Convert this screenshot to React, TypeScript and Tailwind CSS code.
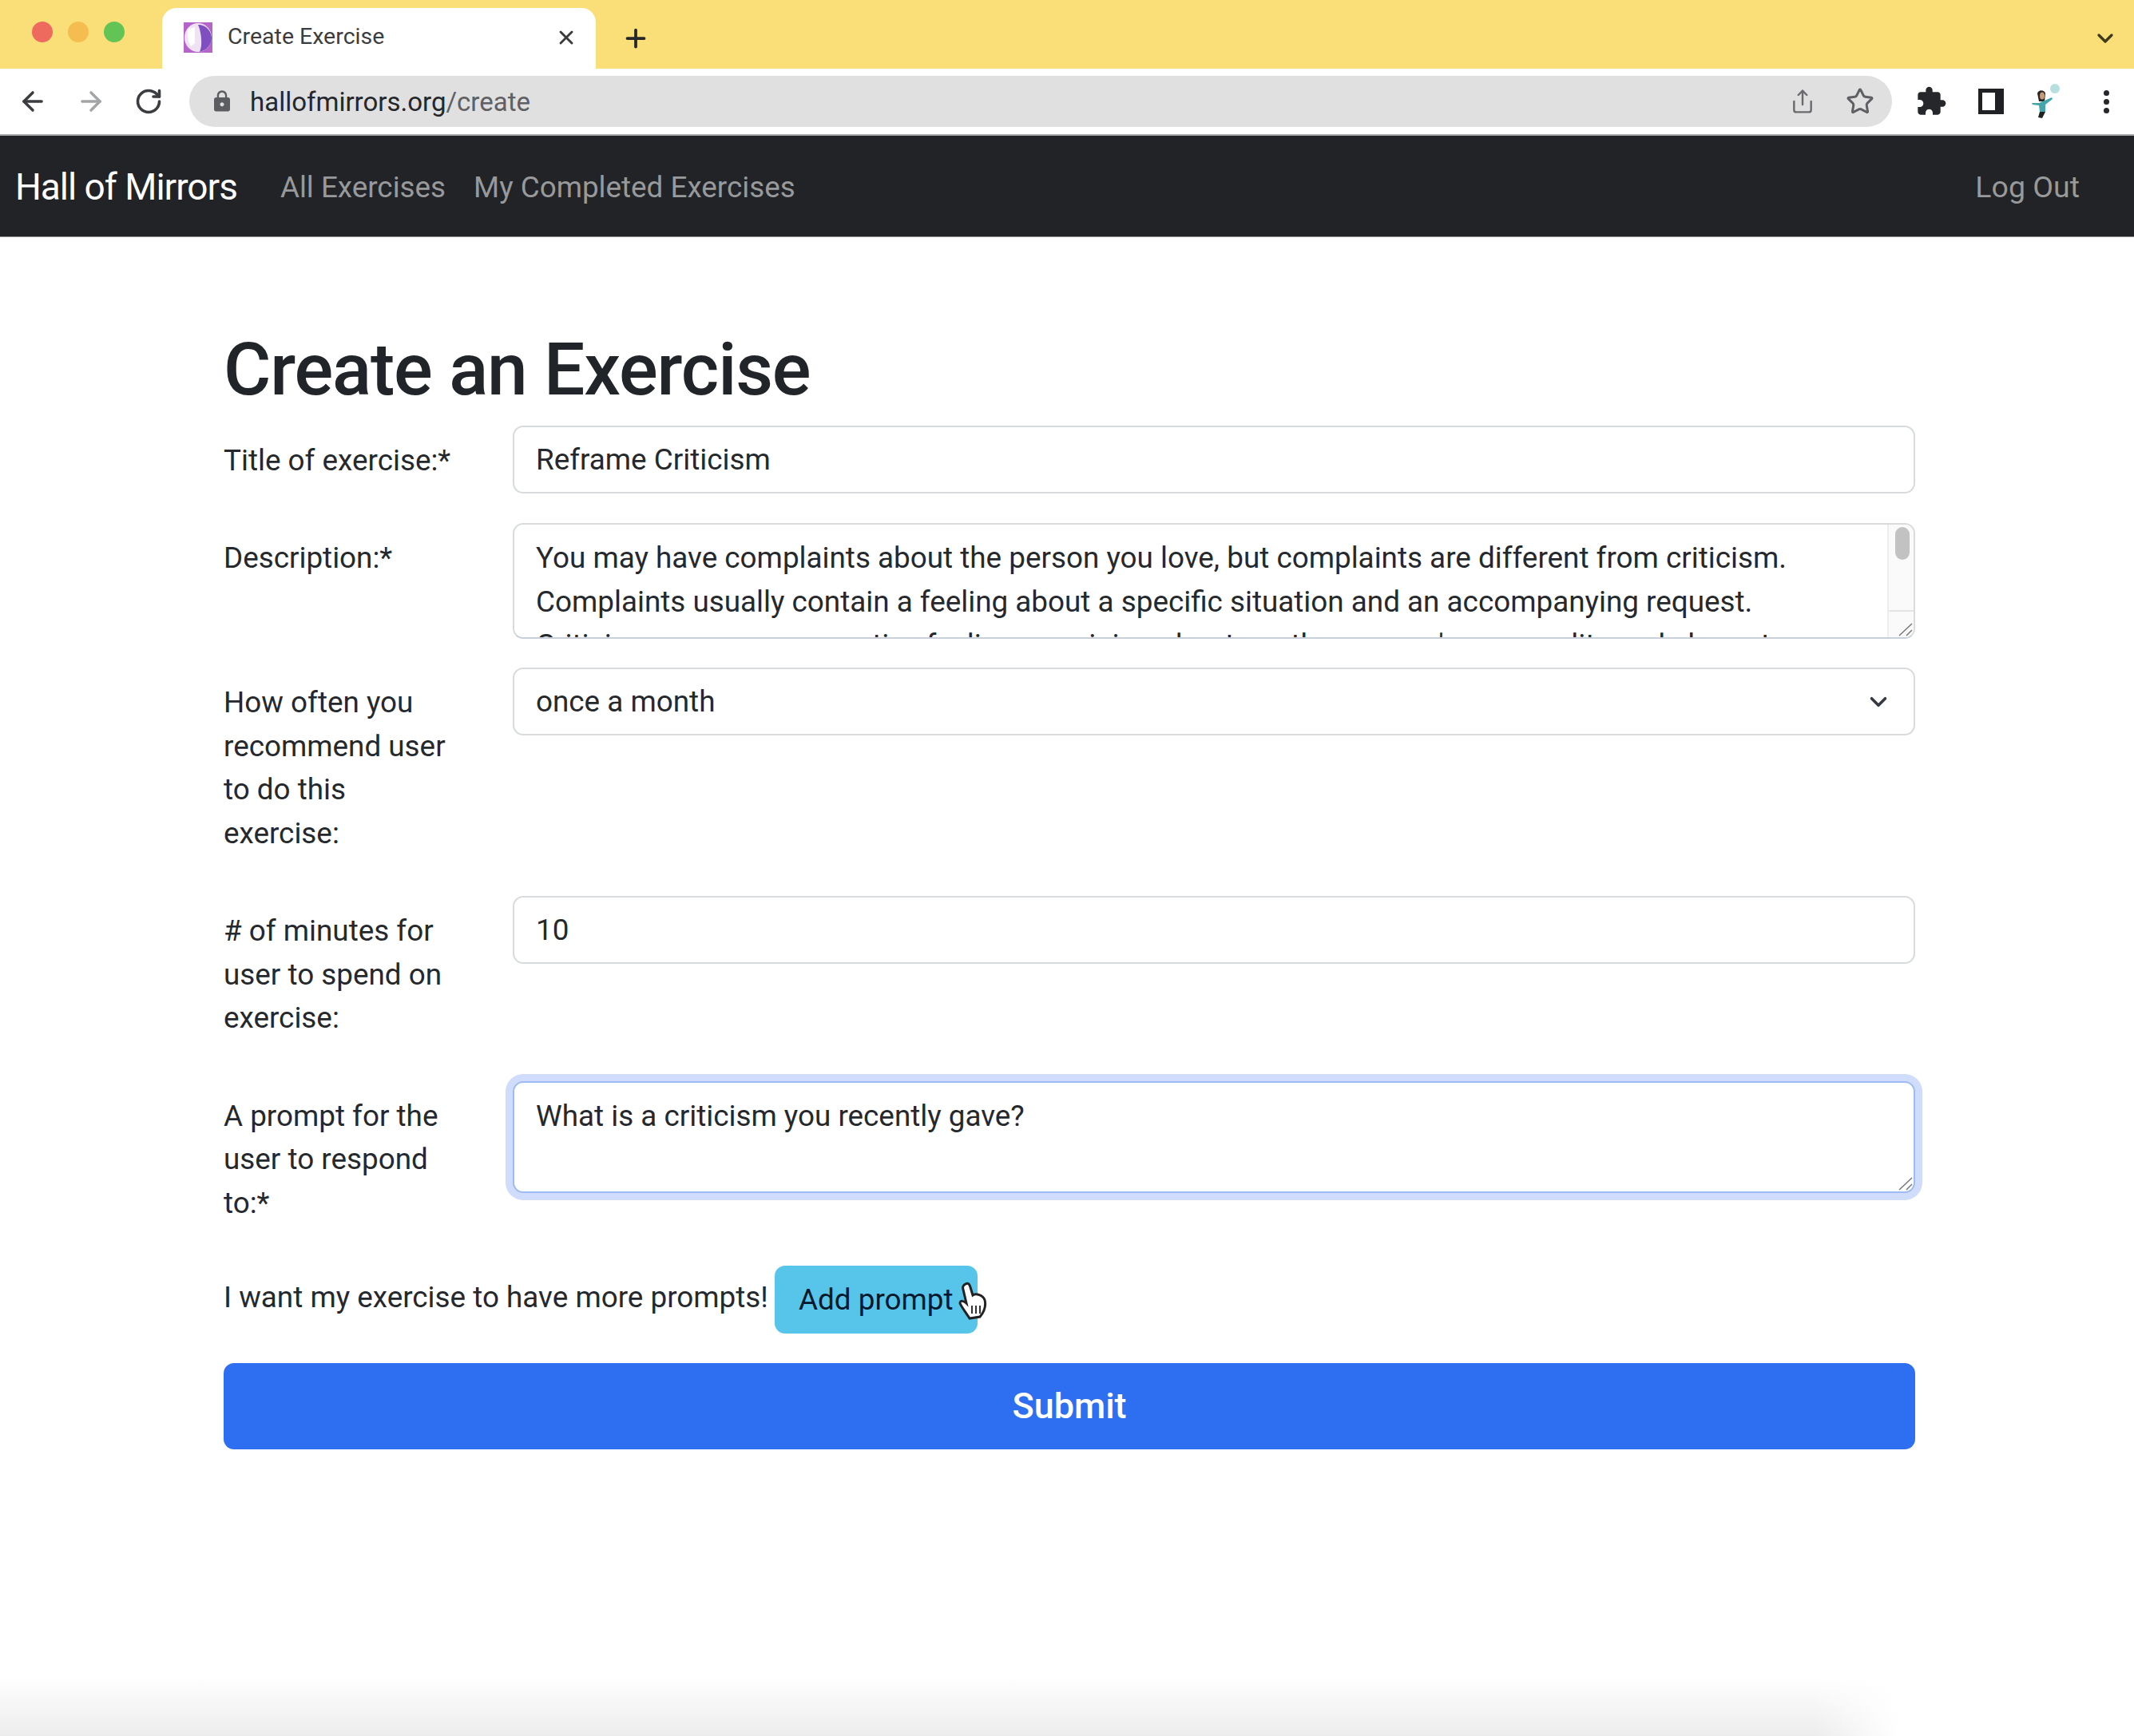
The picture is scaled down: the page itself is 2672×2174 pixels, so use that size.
import React from 'react';
import { ArrowLeft, ArrowRight, ChevronDown, Plus, RotateCw, Share, Star, X } from 'lucide-react';
import { MdExtension, MdLock } from 'react-icons/md';

const labelClass = 'w-[362px] shrink-0 pr-[72px] leading-[54.5px] pt-[17px] pb-[13px]';
const inputClass = 'flex-1 h-[85px] border-2 border-[#d8dbde] rounded-[13px] px-[27px] flex items-center bg-white';

function Favicon() {
  return (
    <svg width="36" height="38" viewBox="0 0 36 38" className="shrink-0">
      <rect width="36" height="38" fill="#b565c9" />
      <ellipse cx="18" cy="19" rx="17" ry="18" fill="#efe3f3" />
      <path d="M18 3 C28 3 34 10 35 19 C35 28 29 35 20 37 C24 28 22 12 18 3Z" fill="#7d4fc0" />
      <path d="M6 8 L14 6 L14 26 L9 30 C5 24 4 14 6 8Z" fill="#ffffff" />
    </svg>
  );
}

function Avatar() {
  return (
    <svg width="38" height="44" viewBox="0 0 38 44">
      <circle cx="30" cy="6" r="6" fill="#b5e0dd" />
      <path d="M8 12 C9 7 17 7 18 12 L17 22 L10 22Z" fill="#262626" />
      <ellipse cx="14" cy="15" rx="3" ry="4.5" fill="#c79a74" />
      <path d="M1 24 L10 24 L26 17 L27 19 L18 26 L18 35 L11 35 L10 27 L2 26Z" fill="#45a5ac" />
      <path d="M11 35 L18 35 L14 43 L9 42Z" fill="#222222" />
    </svg>
  );
}

function BrowserChrome() {
  return (
    <div>
      {/* Tab strip */}
      <div className="h-[86px] bg-[#fadf78] flex items-end relative">
        <div className="flex gap-[19px] ml-[40px] mb-[33px] w-[163px]">
          <span className="w-[26px] h-[26px] rounded-full bg-[#ee6a5f]" />
          <span className="w-[26px] h-[26px] rounded-full bg-[#f5bd4f]" />
          <span className="w-[26px] h-[26px] rounded-full bg-[#61c454]" />
        </div>
        <div className="w-[543px] h-[76px] bg-white rounded-t-[18px] flex items-center pl-[27px] pr-[23px] pb-[3px]">
          <Favicon />
          <span className="ml-[19px] text-[28.5px] text-[#3c3d40] flex-1">Create Exercise</span>
          <X size={28} strokeWidth={2.5} className="text-[#3a3b3d]" />
        </div>
        <Plus size={36} strokeWidth={2.5} className="ml-[32px] mb-[20px] text-[#26272a]" />
        <ChevronDown size={32} strokeWidth={2.5} className="ml-auto mr-[20px] mb-[22px] text-[#3f3a1d]" />
      </div>
      {/* Address bar */}
      <div className="h-[84px] bg-white flex items-center border-b-2 border-[#a9a9a9]">
        <ArrowLeft size={38} strokeWidth={2.2} className="ml-[22px] text-[#3c3d40]" />
        <ArrowRight size={38} strokeWidth={2.2} className="ml-[35px] text-[#a4a5a7]" />
        <RotateCw size={36} strokeWidth={2.4} className="ml-[35px] text-[#3c3d40]" />
        <div className="ml-[33px] w-[2132px] h-[64px] rounded-full bg-[#e0e0e0] flex items-center pl-[26px] pr-[22px]">
          <MdLock size={30} className="text-[#5c5d60]" />
          <span className="ml-[20px] pt-[1px] text-[33px] text-[#26272a]">
            hallofmirrors.org<span className="text-[#5f6063]">/create</span>
          </span>
          <Share size={32} strokeWidth={1.8} className="ml-auto text-[#696a6d]" />
          <Star size={36} strokeWidth={2} className="ml-[38px] text-[#5f6063]" />
        </div>
        <MdExtension size={40} className="ml-[29px] text-[#26272a]" />
        <div className="ml-[39px] w-[32px] h-[32px] border-[5px] border-r-[11px] border-[#202124] bg-white" />
        <div className="ml-[34px]"><Avatar /></div>
        <div className="ml-[53px] flex flex-col gap-[4px]">
          <span className="w-[7px] h-[7px] rounded-full bg-[#26272a]" />
          <span className="w-[7px] h-[7px] rounded-full bg-[#26272a]" />
          <span className="w-[7px] h-[7px] rounded-full bg-[#26272a]" />
        </div>
      </div>
    </div>
  );
}

function Navbar() {
  return (
    <nav className="h-[127px] bg-[#212327] flex items-center pl-[19px] pr-[68px] pt-[3px] border-b border-[#8b8c8f]">
      <span className="text-[46px] text-white tracking-[-1px]">Hall of Mirrors</span>
      <span className="ml-[54px] text-[36.8px] text-[#97999b]">All Exercises</span>
      <span className="ml-[35px] text-[36.8px] text-[#97999b]">My Completed Exercises</span>
      <span className="ml-auto text-[37.5px] text-[#97999b]">Log Out</span>
    </nav>
  );
}

function CreateForm() {
  return (
    <main className="w-[2118px] ml-[280px] text-[36.85px] text-[#25292d]">
      <h1 className="text-[91px] leading-[109px] font-medium tracking-[-1.15px] text-[#212529] pt-[112px] pb-[15px]">Create an Exercise</h1>

      <div className="flex">
        <label className={labelClass}>Title of exercise:*</label>
        <div className={inputClass}>Reframe Criticism</div>
      </div>

      <div className="flex mt-[37px]">
        <label className={labelClass}>Description:*</label>
        <div className="flex-1 relative h-[145px] border-2 border-b-[#c9d0da] border-[#d8dbde] rounded-[13px] overflow-hidden bg-white pl-[27px] pr-[70px] pt-[15px] leading-[54.5px]">
          <div>
            You may have complaints about the person you love, but complaints are different from criticism.
            Complaints usually contain a feeling about a specific situation and an accompanying request.
            Criticisms express a negative feeling or opinion about another person's personality and character.
          </div>
          {/* Scrollbar and resize handle */}
          <div className="absolute top-0 bottom-0 right-0 w-[33px] bg-[#fafafa] border-l-2 border-[#ededed]">
            <div className="ml-[8px] mt-[3px] w-[18px] h-[41px] rounded-full bg-[#c2c2c2]" />
            <div className="absolute left-0 right-0 bottom-0 h-[34px] bg-[#fafafa] border-t-2 border-[#e4e4e4]">
              <svg width="20" height="20" viewBox="0 0 20 20" className="absolute right-0 bottom-0">
                <path d="M2 18 L18 3 M11 18 L18 11" stroke="#777777" strokeWidth="1.5" />
              </svg>
            </div>
          </div>
        </div>
      </div>

      <div className="flex mt-[36px]">
        <label className={labelClass}>How often you recommend user to do this exercise:</label>
        <div className={`${inputClass} justify-between`}>
          once a month
          <ChevronDown size={34} strokeWidth={2.5} className="text-[#343a40]" />
        </div>
      </div>

      <div className="flex mt-[38px]">
        <label className={labelClass}># of minutes for user to spend on exercise:</label>
        <div className={inputClass}>10</div>
      </div>

      <div className="flex mt-[38px]">
        <label className={labelClass}>A prompt for the user to respond to:*</label>
        <div className="flex-1 relative h-[140px] border-2 border-[#9dbcf5] rounded-[13px] bg-white px-[27px] pt-[15px] leading-[54.5px] shadow-[0_0_0_9px_#d0dcfb]">
          What is a criticism you recently gave?
          <svg width="20" height="20" viewBox="0 0 20 20" className="absolute right-0 bottom-0">
            <path d="M2 18 L18 3 M11 18 L18 11" stroke="#777777" strokeWidth="1.5" />
          </svg>
        </div>
      </div>

      <div className="flex items-center mt-[38px] relative">
        <span className="pb-[5px]">I want my exercise to have more prompts!</span>
        <button className="ml-[8px] w-[254px] h-[85px] bg-[#57c5ea] rounded-[13px] text-[#06192a]">Add prompt</button>
        <svg width="36" height="48" viewBox="0 0 36 48" className="absolute left-[920px] top-[20px]">
          <path d="M9 3 C12 1 14 3 15 7 L18 17 C22 14 31 17 33 23 C35 31 32 38 27 44 L14 46 C9 38 4 32 2 27 C2 23 7 24 10 27 L6 10 C5 7 6 4 9 3Z" fill="#ffffff" stroke="#222222" strokeWidth="3" />
          <path d="M17 30 V40 M22 30 V40 M27 30 V40" stroke="#333333" strokeWidth="2" />
        </svg>
      </div>

      <button className="mt-[37px] w-full h-[108px] bg-[#2d6ff0] rounded-[13px] text-white text-[45px] font-medium">Submit</button>
    </main>
  );
}

export default function App() {
  return (
    <div className="relative h-[2174px] w-[2672px] overflow-hidden bg-white font-['Roboto',sans-serif]">
      <BrowserChrome />
      <Navbar />
      <CreateForm />
      {/* Soft shadow along the bottom edge */}
      <div className="absolute left-0 right-0 bottom-0 h-[74px] bg-gradient-to-t from-[#ececec] to-transparent [mask-image:linear-gradient(to_right,black_85%,transparent_89%)]" />
    </div>
  );
}
